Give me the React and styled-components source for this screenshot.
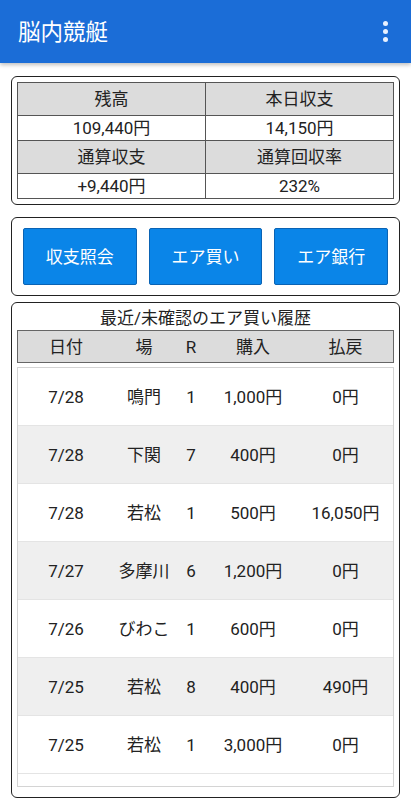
import styled, { createGlobalStyle } from "styled-components";

const GlobalStyle = createGlobalStyle`
  body {
    margin: 0;
    background: #fff;
    font-family: Roboto, "Noto Sans CJK JP", sans-serif;
    color: #222;
  }
`;

const COLS = "96px 60px 34px 90px 1fr";

const Page = styled.div`
  width: 411px;
  height: 800px;
  display: flex;
  flex-direction: column;
  overflow: hidden;
`;

const AppBar = styled.header`
  height: 63px;
  flex-shrink: 0;
  background: #1b6dd7;
  box-shadow: 0 2px 4px rgba(0, 0, 0, 0.25);
  display: flex;
  align-items: center;
  justify-content: space-between;
  padding: 0 23px 0 18px;
  color: #fff;
  box-sizing: border-box;
`;

const Title = styled.h1`
  margin: 0;
  font-size: 22.5px;
  font-weight: 400;
  line-height: 28px;
`;

const Kebab = styled.div`
  display: flex;
  flex-direction: column;
  gap: 3px;
  span {
    width: 5px;
    height: 5px;
    border-radius: 50%;
    background: #e8f1ff;
  }
`;

const Body = styled.main`
  display: flex;
  flex-direction: column;
  padding: 13px 11px 0 11px;
  gap: 12px;
  flex: 1;
  min-height: 0;
`;

const Card = styled.section`
  border: 1.5px solid #222;
  border-radius: 6px;
  padding: ${(p) => p.$pad || "5px"};
  background: #fff;
  ${(p) => p.$grow && "flex: 1; min-height: 0; display: flex; flex-direction: column; margin-top: -6px; margin-bottom: 2px;"}
`;

const SummaryTable = styled.table`
  width: 100%;
  table-layout: fixed;
  border-collapse: collapse;
  font-size: 17px;
  line-height: 20px;
  text-align: center;
  td {
    border: 1px solid #555;
    padding: 0;
  }
`;

const HeadCell = styled.td`
  background: #dcdcdc;
  height: 32px;
`;

const ValueCell = styled.td`
  background: #fff;
  height: 24px;
`;

const ButtonRow = styled.div`
  display: grid;
  grid-template-columns: repeat(3, 1fr);
  gap: 12px;
`;

const ActionButton = styled.button`
  height: 57px;
  background: #0a85e8;
  border: 1px solid #0a63b4;
  border-radius: 2px;
  color: #fff;
  font-family: inherit;
  font-size: 17px;
  line-height: 20px;
  padding: 0;
`;

const HistoryTitle = styled.div`
  text-align: center;
  font-size: 17px;
  height: 24px;
  line-height: 24px;
  margin-top: -2px;
`;

const HistoryHead = styled.div`
  display: grid;
  grid-template-columns: ${COLS};
  background: #dcdcdc;
  border: 1px solid #666;
  height: 31px;
  align-items: center;
  text-align: center;
  font-size: 17px;
  line-height: 20px;
`;

const List = styled.div`
  margin-top: 4px;
  border: 1px solid #d4d4d4;
  flex: 1;
  min-height: 0;
  overflow: hidden;
`;

const Row = styled.div`
  display: grid;
  grid-template-columns: ${COLS};
  height: 58px;
  align-items: center;
  text-align: center;
  font-size: 17px;
  line-height: 20px;
  background: ${(p) => (p.$alt ? "#efefef" : "#fff")};
  border-bottom: 1px solid #e4e4e4;
  box-sizing: border-box;
`;

const rows = [
  ["7/28", "鳴門", "1", "1,000円", "0円"],
  ["7/28", "下関", "7", "400円", "0円"],
  ["7/28", "若松", "1", "500円", "16,050円"],
  ["7/27", "多摩川", "6", "1,200円", "0円"],
  ["7/26", "びわこ", "1", "600円", "0円"],
  ["7/25", "若松", "8", "400円", "490円"],
  ["7/25", "若松", "1", "3,000円", "0円"],
];

const App = () => {
  return (
    <Page>
      <GlobalStyle />
      <AppBar>
        <Title>脳内競艇</Title>
        <Kebab>
          <span />
          <span />
          <span />
        </Kebab>
      </AppBar>
      <Body>
        <Card>
          <SummaryTable>
            <tbody>
              <tr>
                <HeadCell>残高</HeadCell>
                <HeadCell>本日収支</HeadCell>
              </tr>
              <tr>
                <ValueCell>109,440円</ValueCell>
                <ValueCell>14,150円</ValueCell>
              </tr>
              <tr>
                <HeadCell>通算収支</HeadCell>
                <HeadCell>通算回収率</HeadCell>
              </tr>
              <tr>
                <ValueCell>+9,440円</ValueCell>
                <ValueCell>232%</ValueCell>
              </tr>
            </tbody>
          </SummaryTable>
        </Card>
        <Card $pad="10px 11px">
          <ButtonRow>
            <ActionButton>収支照会</ActionButton>
            <ActionButton>エア買い</ActionButton>
            <ActionButton>エア銀行</ActionButton>
          </ButtonRow>
        </Card>
        <Card $grow $pad="5px 5px 10px 5px">
          <HistoryTitle>最近/未確認のエア買い履歴</HistoryTitle>
          <HistoryHead>
            <span>日付</span>
            <span>場</span>
            <span>R</span>
            <span>購入</span>
            <span>払戻</span>
          </HistoryHead>
          <List>
            {rows.map((r, i) => (
              <Row key={i} $alt={i % 2 === 1}>
                {r.map((c, j) => (
                  <span key={j}>{c}</span>
                ))}
              </Row>
            ))}
          </List>
        </Card>
      </Body>
    </Page>
  );
};

export default App;
